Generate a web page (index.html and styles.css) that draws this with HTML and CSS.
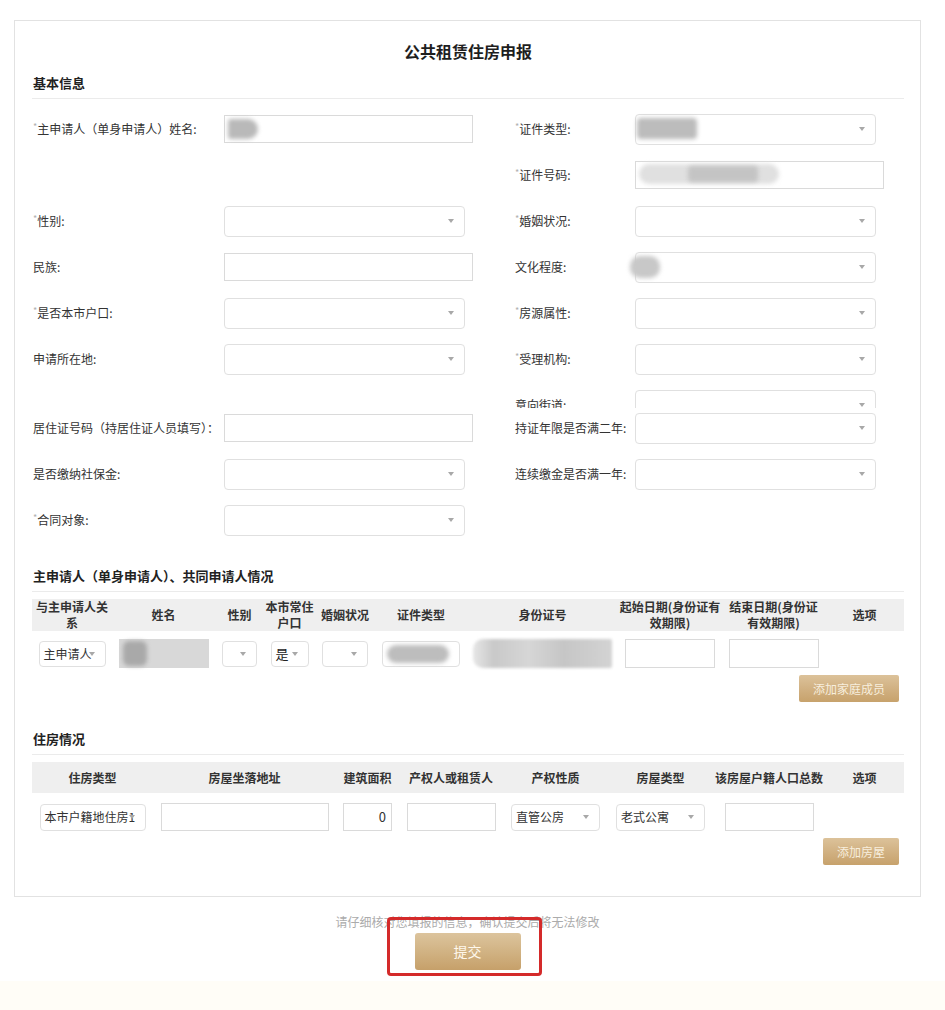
FILE: index.html
```html
<!DOCTYPE html>
<html lang="zh-CN">
<head>
<meta charset="utf-8">
<title>公共租赁住房申报</title>
<link rel="stylesheet" href="styles.css">
</head>
<body>
<div class="card">
  <h1 class="title">公共租赁住房申报</h1>
  <div class="sec-head">基本信息</div>
  <div class="form">
    <div class="row">
      <div class="lbl"><span class="req">*</span>主申请人（单身申请人）姓名:</div>
      <div class="fld"><div class="inp"><span class="blur bl-name"></span></div></div>
      <div class="lbl"><span class="req">*</span>证件类型:</div>
      <div class="fld"><div class="sel"><span class="blur bl-type"></span><i class="arr"></i></div></div>
    </div>
    <div class="row">
      <div></div>
      <div></div>
      <div class="lbl"><span class="req">*</span>证件号码:</div>
      <div class="fld"><div class="inp"><span class="blur bl-id"></span><span class="blur bl-id2"></span></div></div>
    </div>
    <div class="row">
      <div class="lbl"><span class="req">*</span>性别:</div>
      <div class="fld"><div class="sel"><i class="arr"></i></div></div>
      <div class="lbl"><span class="req">*</span>婚姻状况:</div>
      <div class="fld"><div class="sel"><i class="arr"></i></div></div>
    </div>
    <div class="row">
      <div class="lbl">民族:</div>
      <div class="fld"><div class="inp"></div></div>
      <div class="lbl">文化程度:</div>
      <div class="fld"><div class="sel"><span class="blur bl-edu"></span><i class="arr"></i></div></div>
    </div>
    <div class="row">
      <div class="lbl"><span class="req">*</span>是否本市户口:</div>
      <div class="fld"><div class="sel"><i class="arr"></i></div></div>
      <div class="lbl"><span class="req">*</span>房源属性:</div>
      <div class="fld"><div class="sel"><i class="arr"></i></div></div>
    </div>
    <div class="row">
      <div class="lbl">申请所在地:</div>
      <div class="fld"><div class="sel"><i class="arr"></i></div></div>
      <div class="lbl"><span class="req">*</span>受理机构:</div>
      <div class="fld"><div class="sel"><i class="arr"></i></div></div>
    </div>
    <div class="clipwrap">
      <div class="row">
        <div></div>
        <div></div>
        <div class="lbl">意向街道:</div>
        <div class="fld"><div class="sel"><i class="arr"></i></div></div>
      </div>
    </div>
    <div class="row">
      <div class="lbl">居住证号码（持居住证人员填写）：</div>
      <div class="fld"><div class="inp"></div></div>
      <div class="lbl">持证年限是否满二年:</div>
      <div class="fld"><div class="sel"><i class="arr"></i></div></div>
    </div>
    <div class="row">
      <div class="lbl">是否缴纳社保金:</div>
      <div class="fld"><div class="sel"><i class="arr"></i></div></div>
      <div class="lbl">连续缴金是否满一年:</div>
      <div class="fld"><div class="sel"><i class="arr"></i></div></div>
    </div>
    <div class="row">
      <div class="lbl"><span class="req">*</span>合同对象:</div>
      <div class="fld"><div class="sel"><i class="arr"></i></div></div>
      <div></div>
      <div></div>
    </div>
  </div>

  <div class="sec-head sec2">主申请人（单身申请人）、共同申请人情况</div>
  <div class="tbl t1">
    <div class="thead">
      <div>与主申请人关<br>系</div>
      <div>姓名</div>
      <div>性别</div>
      <div>本市常住<br>户口</div>
      <div>婚姻状况</div>
      <div>证件类型</div>
      <div>身份证号</div>
      <div>起始日期(身份证有<br>效期限)</div>
      <div>结束日期(身份证<br>有效期限)</div>
      <div>选项</div>
    </div>
    <div class="trow">
      <div class="sel s-sm w67"><span class="val">主申请人</span><i class="arr"></i></div>
      <div class="blurbox w90"><span class="blur bl-n1"></span></div>
      <div class="sel s-sm w35"><i class="arr"></i></div>
      <div class="sel s-sm w38"><span class="val big">是</span><i class="arr"></i></div>
      <div class="sel s-sm w46"><i class="arr"></i></div>
      <div class="sel s-sm w78"><span class="blur bl-t1"></span></div>
      <div class="blurbox2 w139"></div>
      <div class="inp i-29 w90"></div>
      <div class="inp i-29 w90"></div>
      <div></div>
    </div>
    <div class="actions"><span class="btn-gold b-member">添加家庭成员</span></div>
  </div>

  <div class="sec-head sec3">住房情况</div>
  <div class="tbl t2">
    <div class="thead">
      <div>住房类型</div>
      <div>房屋坐落地址</div>
      <div>建筑面积</div>
      <div>产权人或租赁人</div>
      <div>产权性质</div>
      <div>房屋类型</div>
      <div>该房屋户籍人口总数</div>
      <div>选项</div>
    </div>
    <div class="trow">
      <div class="sel s-md w106"><span class="val">本市户籍地住房1</span><i class="arr"></i></div>
      <div class="inp i-28 w168"></div>
      <div class="inp i-28 w49 num">0</div>
      <div class="inp i-28 w89"></div>
      <div class="sel s-md w89"><span class="val">直管公房</span><i class="arr"></i></div>
      <div class="sel s-md w89"><span class="val">老式公寓</span><i class="arr"></i></div>
      <div class="inp i-28 w89"></div>
      <div></div>
    </div>
    <div class="actions"><span class="btn-gold b-house">添加房屋</span></div>
  </div>
</div>

<div class="foot">
  <p class="hint">请仔细核对您填报的信息，确认提交后将无法修改</p>
  <span class="submit">提交</span>
  <span class="mark"></span>
</div>
<div class="page-bottom"></div>
</body>
</html>
```

FILE: styles.css
```css
* { box-sizing: border-box; }

html, body { background: #fff; }

body {
  margin: 0;
  font-family: "Noto Sans CJK SC", "Noto Sans", sans-serif;
  font-size: 12px;
  color: #333;
}

.card {
  margin: 20px 0 0 14px;
  width: 907px;
  border: 1px solid #e2e2e2;
  padding: 18px 16px 31px 17px;
}

.title {
  margin: 0 0 10px;
  font-size: 16px;
  line-height: 24px;
  font-weight: bold;
  text-align: center;
  color: #1e1e1e;
}

.sec-head {
  font-size: 13px;
  font-weight: bold;
  line-height: 20px;
  padding: 0 0 5px 1px;
  border-bottom: 1px solid #ebebeb;
  color: #222;
}

.sec2 { margin-top: 30px; }
.sec3 { margin-top: 27px; }

.form { margin-top: 14px; }

.row {
  display: grid;
  grid-template-columns: 192px 290px 121px 249px;
  height: 32px;
  align-items: center;
  margin-bottom: 14px;
}

.clipwrap {
  height: 19px;
  overflow: hidden;
  margin-bottom: 4px;
}
.clipwrap .row { margin-bottom: 0; }

.lbl {
  line-height: 16px;
  white-space: nowrap;
  padding-left: 1px;
  color: #333;
}

.req {
  color: #b0b0b0;
  font-size: 9px;
  vertical-align: top;
  line-height: 12px;
}

.inp {
  position: relative;
  width: 249px;
  height: 28px;
  border: 1px solid #dadada;
  background: #fff;
}

.sel {
  position: relative;
  width: 241px;
  height: 31px;
  border: 1px solid #e0e0e0;
  border-radius: 4px;
  background: #fff;
}

.arr {
  position: absolute;
  right: 10px;
  top: 50%;
  margin-top: -2px;
  width: 0;
  height: 0;
  border-left: 3px solid transparent;
  border-right: 3px solid transparent;
  border-top: 4px solid #a8a8a8;
}

.blur {
  position: absolute;
  background: #bdbdbd;
  filter: blur(2px);
  border-radius: 4px;
}

.bl-name { left: 3px; top: 3px; width: 30px; height: 20px; background: #b9b9b9; border-radius: 3px 10px 10px 3px; }
.bl-type { left: 1px; top: 3px; width: 60px; height: 21px; background: #bcbcbc; }
.bl-id { left: 3px; top: 2px; width: 140px; height: 20px; background: #e0e0e0; border-radius: 10px; }
.bl-id2 { left: 52px; top: 4px; width: 70px; height: 16px; background: #c4c4c4; }
.bl-edu { left: -6px; top: 3px; width: 30px; height: 22px; background: #c8c8c8; border-radius: 10px; }

/* tables */
.tbl { margin-top: 7px; }

.thead {
  display: grid;
  background: #efefef;
  align-items: center;
  justify-items: center;
  text-align: center;
  font-weight: bold;
  line-height: 16px;
  color: #333;
}

.trow {
  display: grid;
  align-items: center;
  justify-items: center;
}

.t1 { margin-top: 7px; }
.t1 .thead, .t1 .trow {
  grid-template-columns: 80px 103px 49px 51px 60px 92px 151px 104px 103px 79px;
}
.t1 .thead { height: 32px; white-space: nowrap; }
.t1 .trow { padding-top: 8px; height: 37px; }

.t2 .thead, .t2 .trow {
  grid-template-columns: 121px 183px 63px 104px 105px 105px 112px 79px;
}
.t2 .thead { height: 31px; white-space: nowrap; }
.t2 .trow { padding-top: 10px; height: 38px; }

.s-sm { height: 26px; }
.s-md { height: 27px; }
.i-29 { height: 29px; }
.i-28 { height: 28px; }

.w35 { width: 35px; }
.w38 { width: 38px; }
.w46 { width: 46px; }
.w49 { width: 49px; }
.w67 { width: 67px; }
.w78 { width: 78px; }
.w89 { width: 89px; }
.w90 { width: 90px; }
.w106 { width: 106px; }
.w139 { width: 139px; }
.w168 { width: 168px; }

.val {
  display: block;
  padding-left: 4px;
  line-height: 24px;
  white-space: nowrap;
  overflow: hidden;
  color: #333;
}
.val.big { font-size: 13px; color: #222; }

.num {
  text-align: right;
  padding-right: 5px;
  line-height: 26px;
  font-size: 13px;
  color: #333;
}

.blurbox {
  position: relative;
  height: 29px;
  background: #d8d8d8;
  filter: blur(0.6px);
}
.bl-n1 { left: 4px; top: 2px; width: 24px; height: 25px; background: #a9a9a9; border-radius: 6px; }

.bl-t1 { left: 4px; top: 3px; width: 62px; height: 18px; background: #bdbdbd; border-radius: 9px; }

.blurbox2 {
  height: 29px;
  background: linear-gradient(90deg, #e6e6e6 0%, #c9c9c9 15%, #d6d6d6 40%, #c6c6c6 65%, #d3d3d3 100%);
  border-radius: 10px 2px 2px 10px;
  filter: blur(1.5px);
}

.actions {
  display: flex;
  justify-content: flex-end;
  padding-right: 5px;
  margin-top: 7px;
}

.btn-gold {
  display: inline-block;
  height: 27px;
  line-height: 27px;
  text-align: center;
  font-size: 12px;
  color: #f7eedd;
  background: linear-gradient(180deg, #dcc29a 0%, #cfae7e 60%, #c7a26c 100%);
  border-radius: 2px;
}
.b-member { width: 100px; }
.b-house { width: 76px; }

/* footer */
.foot {
  position: relative;
  width: 907px;
  height: 84px;
  margin-left: 14px;
  text-align: center;
}

.hint {
  margin: 0;
  padding-top: 17px;
  line-height: 16px;
  color: #ababab;
  font-size: 12px;
}

.submit {
  display: block;
  margin: 3px auto 0;
  width: 106px;
  height: 37px;
  line-height: 37px;
  font-size: 14px;
  color: #fff8ec;
  background: linear-gradient(180deg, #dcc49d 0%, #d0b181 55%, #c6a06a 100%);
  border-radius: 3px;
}

.mark {
  position: absolute;
  left: 373px;
  top: 20px;
  width: 155px;
  height: 59px;
  border: 3px solid #d42a2a;
  border-radius: 4px;
}

.page-bottom {
  height: 40px;
  background: #fffdf7;
}
```
